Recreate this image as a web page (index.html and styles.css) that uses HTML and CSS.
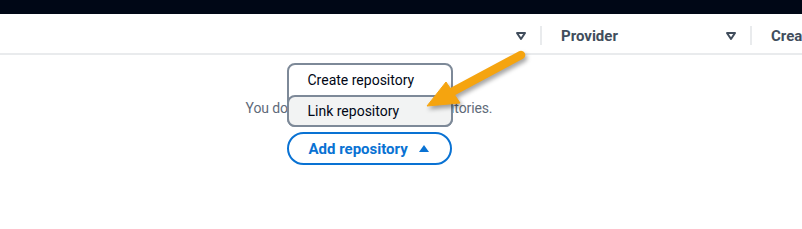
FILE: index.html
```html
<!DOCTYPE html>
<html lang="en">
<head>
<meta charset="utf-8">
<title>Repositories</title>
<link rel="stylesheet" href="styles.css">
</head>
<body>
<div class="page">
  <div class="topbar"></div>
  <div class="thead">
    <div class="th th-first">
      <svg class="sort" viewBox="0 0 16 16" width="16" height="16"><path d="M4 5h8l-4 6z"/></svg>
    </div>
    <div class="sep"></div>
    <div class="th th-mid">
      <span class="label">Provider</span>
      <svg class="sort" viewBox="0 0 16 16" width="16" height="16"><path d="M4 5h8l-4 6z"/></svg>
    </div>
    <div class="sep"></div>
    <div class="th th-last">
      <span class="label">Created</span>
    </div>
  </div>
  <div class="empty">
    <p class="empty-text">You do not have any source repositories.</p>
    <div class="btn-wrap">
      <button class="btn" type="button"><span>Add repository</span>
        <svg class="caret" viewBox="0 0 16 16" width="16" height="16"><path d="M3 11h10L8 4z"/></svg>
      </button>
      <ul class="menu">
        <li class="item">Create repository</li>
        <li class="item item-hl">Link repository</li>
      </ul>
    </div>
  </div>
  <svg class="arrow" viewBox="0 0 802 229" width="802" height="229">
    <g class="arrow-g">
      <line x1="521" y1="55" x2="450" y2="93"/>
      <polygon points="427,106 446,82 460,103"/>
    </g>
  </svg>
</div>
</body>
</html>
```
FILE: styles.css
```css
html, body {
  margin: 0;
  padding: 0;
  background: #ffffff;
  overflow: hidden;
}
.page {
  position: relative;
  width: 802px;
  height: 229px;
  overflow: hidden;
  font-family: Roboto, "Open Sans", sans-serif;
  font-size: 14px;
  color: #000716;
}
.topbar {
  height: 14px;
  background: #000716;
}
.thead {
  display: flex;
  align-items: center;
  height: 41px;
  box-sizing: border-box;
  padding-top: 4px;
  border-bottom: 2px solid #e9ebed;
  white-space: nowrap;
}
.th {
  display: flex;
  align-items: center;
  justify-content: space-between;
  box-sizing: border-box;
  padding: 0 11px 0 19px;
  flex: none;
}
.th-first {
  width: 540px;
  justify-content: flex-end;
}
.th-mid {
  width: 208px;
}
.th-last {
  width: 100px;
}
.label {
  font-size: 15px;
  font-weight: 700;
  color: #414d5c;
}
.sort {
  flex: none;
}
.sort path {
  fill: none;
  stroke: #414d5c;
  stroke-width: 2;
  stroke-linejoin: round;
}
.sep {
  flex: none;
  width: 2px;
  height: 19px;
  background: #e9ebed;
}
.empty {
  width: 738px;
  padding-top: 43px;
  display: flex;
  flex-direction: column;
  align-items: center;
}
.empty-text {
  margin: 0;
  line-height: 20px;
  font-size: 14px;
  letter-spacing: -0.12px;
  color: #5f6b7a;
  white-space: nowrap;
}
.btn-wrap {
  position: relative;
  margin-top: 14px;
}
.btn {
  display: flex;
  align-items: center;
  gap: 8px;
  box-sizing: border-box;
  height: 33px;
  width: 165px;
  padding: 0 16px 0 20px;
  border: 2px solid #0972d3;
  border-radius: 20px;
  background: #ffffff;
  color: #0972d3;
  font-family: inherit;
  font-size: 15px;
  font-weight: 700;
  white-space: nowrap;
}
.caret {
  flex: none;
}
.caret path {
  fill: #0972d3;
}
.menu {
  position: absolute;
  left: 0;
  bottom: calc(100% + 5px);
  width: 166px;
  box-sizing: border-box;
  margin: 0;
  padding: 0;
  list-style: none;
  background: #ffffff;
  border: 2px solid #7d8998;
  border-radius: 8px;
  font-size: 14px;
}
.item {
  height: 30px;
  line-height: 30px;
  padding: 0 19px;
  white-space: nowrap;
}
.item-hl {
  height: 32px;
  line-height: 28px;
  margin: 0 -2px -2px;
  border: 2px solid #7d8998;
  border-radius: 8px;
  background: #f2f3f3;
  box-sizing: border-box;
}
.arrow {
  position: absolute;
  left: 0;
  top: 0;
  pointer-events: none;
}
.arrow-g {
  filter: drop-shadow(2px 3px 2px rgba(0, 0, 0, 0.35));
}
.arrow-g line {
  stroke: #f5a40f;
  stroke-width: 8.5;
  stroke-linecap: round;
}
.arrow-g polygon {
  fill: #f5a40f;
  stroke: #f5a40f;
  stroke-width: 1;
  stroke-linejoin: round;
}
```
